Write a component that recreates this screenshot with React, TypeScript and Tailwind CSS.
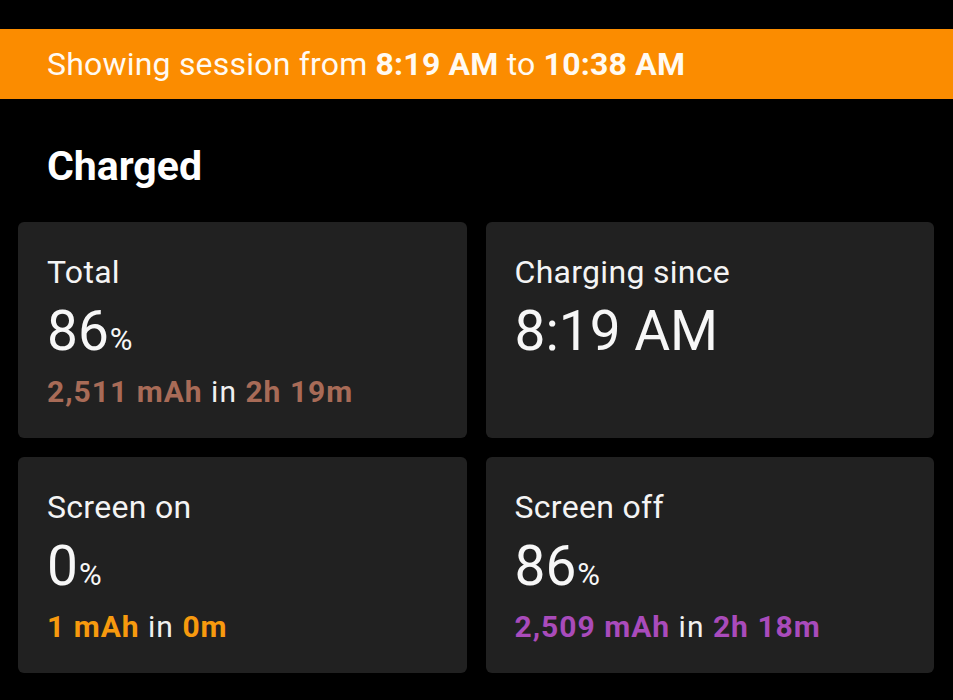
import React from "react";

type Stat = {
  label: string;
  value: string;
  unit?: string;
  amount?: string;
  duration?: string;
  accent?: string;
};

const stats: Stat[] = [
  { label: "Total", value: "86", unit: "%", amount: "2,511 mAh", duration: "2h 19m", accent: "text-[#a86b57]" },
  { label: "Charging since", value: "8:19 AM" },
  { label: "Screen on", value: "0", unit: "%", amount: "1 mAh", duration: "0m", accent: "text-[#f79a0e]" },
  { label: "Screen off", value: "86", unit: "%", amount: "2,509 mAh", duration: "2h 18m", accent: "text-[#a94bbb]" },
];

export default function App() {
  return (
    <div
      className="min-h-[700px] w-full bg-black pt-[29px] text-white"
      style={{ fontFamily: "Roboto, 'Noto Sans', sans-serif" }}
    >
      {/* session banner */}
      <div className="flex h-[70px] items-center bg-[#fb8c00] px-[47px] text-[32px] leading-[36px] tracking-[0.2px] text-[#fffaf2]">
        <span>
          Showing session from <b className="font-bold">8:19 AM</b> to{" "}
          <b className="font-bold">10:38 AM</b>
        </span>
      </div>

      <h2 className="mt-[43px] px-[47px] text-[41px] font-bold leading-[48px]">Charged</h2>

      <div className="mt-[32px] grid grid-cols-2 gap-[19px] pl-[18px] pr-[19px]">
        {stats.map((s) => (
          <StatCard key={s.label} stat={s} />
        ))}
      </div>
    </div>
  );
}

function StatCard({ stat }: { stat: Stat }) {
  return (
    <div className="h-[216px] rounded-[6px] bg-[#212121] px-[29px] pt-[32px]">
      <div className="text-[32px] leading-[36px] tracking-[0.3px] text-[#f4f4f4]">{stat.label}</div>
      <div className="mt-[13px] flex items-baseline text-[55px] leading-[56px] text-[#f7f7f7]">
        {stat.value}
        {stat.unit && <span className="ml-[1px] text-[31px]">{stat.unit}</span>}
      </div>
      {stat.amount && (
        <div className="mt-[8px] text-[30px] leading-[32px] tracking-[1px] text-[#f0f0f0]">
          <span className={`font-bold ${stat.accent}`}>{stat.amount}</span> in{" "}
          <span className={`font-bold ${stat.accent}`}>{stat.duration}</span>
        </div>
      )}
    </div>
  );
}
